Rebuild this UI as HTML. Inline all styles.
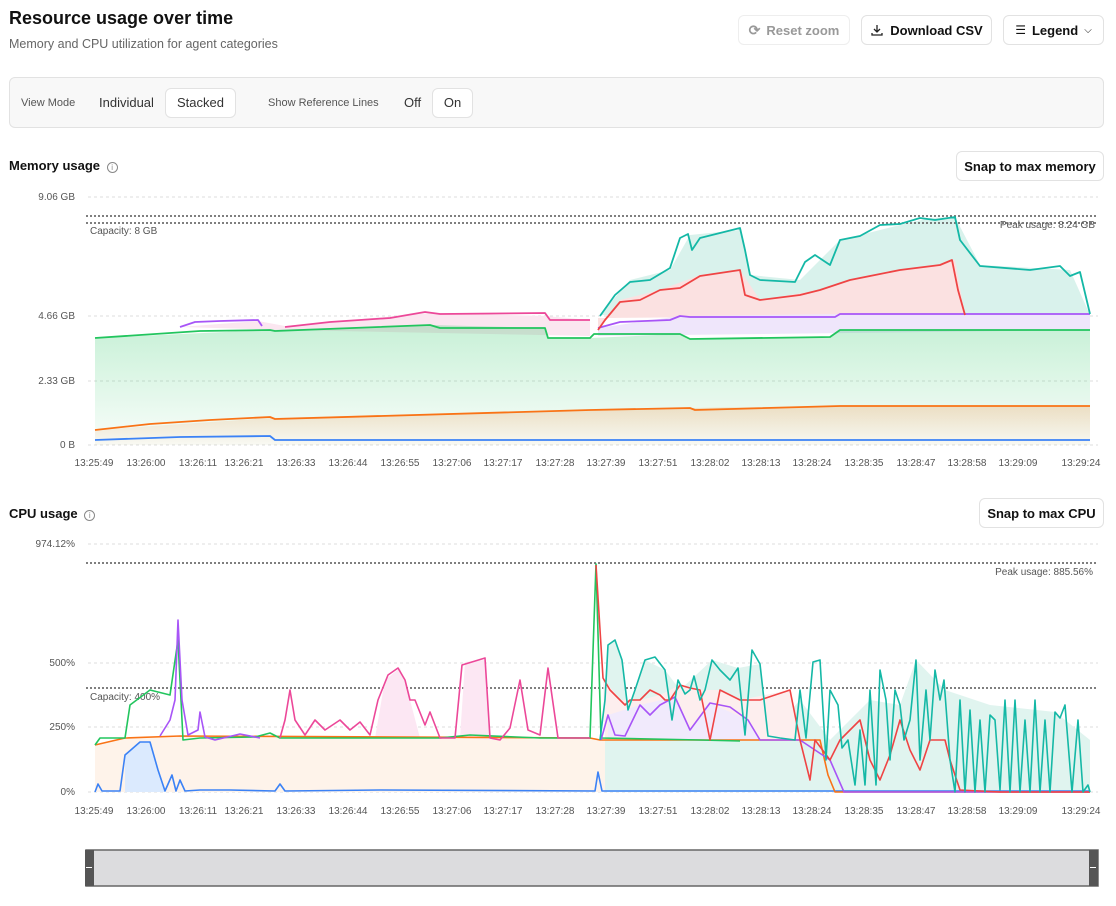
<!DOCTYPE html>
<html><head><meta charset="utf-8"><style>
*{box-sizing:border-box;margin:0;padding:0}
body{width:1116px;height:906px;background:#fff;font-family:"Liberation Sans",sans-serif;color:#111;position:relative;overflow:hidden}
.abs{position:absolute}
.btn{position:absolute;border:1px solid #e2e2e2;border-radius:6px;background:#fff;font-size:13px;font-weight:bold;display:flex;align-items:center;justify-content:center;gap:6px}
.ax{font-size:10px;fill:#555;font-family:"Liberation Sans",sans-serif}
</style></head><body>
<div class="abs" style="left:9px;top:8px;font-size:18px;font-weight:bold">Resource usage over time</div>
<div class="abs" style="left:9px;top:37px;font-size:12.5px;color:#666">Memory and CPU utilization for agent categories</div>
<div class="btn" style="left:738px;top:15px;width:112px;height:30px;color:#999;font-weight:bold;border-color:#eee"><span style="font-size:14px">⟳</span>Reset zoom</div>
<div class="btn" style="left:861px;top:15px;width:131px;height:30px"><svg width="14" height="14" viewBox="0 0 14 14" fill="none" stroke="#222" stroke-width="1.3"><path d="M7 2v7M4 6l3 3 3-3M2 10v2h10v-2"/></svg>Download CSV</div>
<div class="btn" style="left:1003px;top:15px;width:101px;height:30px"><span style="font-size:12px;font-weight:normal">☰</span>Legend<span style="font-weight:normal;font-size:10px">⌵</span></div>
<div class="abs" style="left:9px;top:77px;width:1095px;height:51px;background:#f8f8f8;border:1px solid #e2e2e2;border-radius:6px"></div>
<div class="abs" style="left:21px;top:97px;font-size:11px;color:#555">View Mode</div>
<div class="abs" style="left:99px;top:95px;font-size:13px;color:#333">Individual</div>
<div class="abs" style="left:165px;top:88px;width:71px;height:30px;background:#fff;border:1px solid #e2e2e2;border-radius:6px;font-size:13px;color:#333;text-align:center;line-height:28px">Stacked</div>
<div class="abs" style="left:268px;top:97px;font-size:11px;color:#555">Show Reference Lines</div>
<div class="abs" style="left:404px;top:95px;font-size:13px;color:#333">Off</div>
<div class="abs" style="left:432px;top:88px;width:41px;height:30px;background:#fff;border:1px solid #e2e2e2;border-radius:6px;font-size:13px;color:#333;text-align:center;line-height:28px">On</div>
<div class="abs" style="left:9px;top:158px;font-size:13px;font-weight:bold">Memory usage <span style="display:inline-block;width:11px;height:11px;border:1px solid #888;border-radius:50%;font-size:8px;text-align:center;line-height:9px;color:#888;font-weight:normal;margin-left:3px">i</span></div>
<div class="btn" style="left:956px;top:151px;width:148px;height:30px">Snap to max memory</div>
<div class="abs" style="left:9px;top:506px;font-size:13px;font-weight:bold">CPU usage <span style="display:inline-block;width:11px;height:11px;border:1px solid #888;border-radius:50%;font-size:8px;text-align:center;line-height:9px;color:#888;font-weight:normal;margin-left:3px">i</span></div>
<div class="btn" style="left:979px;top:498px;width:125px;height:30px">Snap to max CPU</div>

<svg class="abs" style="left:0;top:0" width="1116" height="906">
<defs>
<linearGradient id="g1" x1="0" y1="0" x2="0" y2="1"><stop offset="0" stop-color="#22c55e" stop-opacity=".25"/><stop offset="1" stop-color="#22c55e" stop-opacity=".03"/></linearGradient>
<linearGradient id="g2" x1="0" y1="0" x2="0" y2="1"><stop offset="0" stop-color="#f97316" stop-opacity=".2"/><stop offset="1" stop-color="#f97316" stop-opacity=".03"/></linearGradient>
</defs>
<g stroke="#ddd" stroke-dasharray="3,3">
<line x1="88" y1="197" x2="1098" y2="197"/><line x1="88" y1="316" x2="1098" y2="316"/><line x1="88" y1="381" x2="1098" y2="381"/><line x1="88" y1="445" x2="1098" y2="445"/>
<line x1="88" y1="544" x2="1098" y2="544"/><line x1="88" y1="663" x2="1098" y2="663"/><line x1="88" y1="727" x2="1098" y2="727"/><line x1="88" y1="792" x2="1098" y2="792"/>
</g>
<!-- memory fills -->
<polygon fill="#d9f2ec" points="600,315 630,280 670,270 690,235 740,230 750,275 800,280 840,240 900,225 930,218 955,217 980,265 1070,270 1090,315 600,315"/>
<polygon fill="#fbe1e1" points="598,330 620,300 660,290 700,275 740,270 760,300 820,290 870,275 940,265 955,260 965,315 598,318"/>
<polygon fill="#fbe6f0" points="180,327 258,321 285,326 430,313 545,316 590,320 590,336 285,330"/>
<polygon fill="#efe6fb" points="598,328 680,316 840,314 1090,314 1090,330 598,336"/>
<polygon fill="url(#g1)" points="95,338 270,330 430,325 545,328 548,338 590,338 680,334 690,339 830,337 840,330 1090,330 1090,445 95,445"/>
<polygon fill="url(#g2)" points="95,430 270,418 590,410 690,408 840,406 1090,406 1090,445 95,445"/>
<g stroke="#555" stroke-dasharray="2,2" stroke-width="1.5">
<line x1="86" y1="216" x2="1098" y2="216"/><line x1="86" y1="223" x2="1098" y2="223"/>
<line x1="86" y1="563" x2="1098" y2="563"/><line x1="86" y1="688" x2="1098" y2="688"/>
</g>
<g class="ax" text-anchor="end">
<text x="75" y="200">9.06 GB</text><text x="75" y="319">4.66 GB</text><text x="75" y="384">2.33 GB</text><text x="75" y="448">0 B</text>
<text x="75" y="547">974.12%</text><text x="75" y="666">500%</text><text x="75" y="730">250%</text><text x="75" y="795">0%</text>
</g>
<text class="ax" x="90" y="234">Capacity: 8 GB</text>
<text class="ax" x="1095" y="228" text-anchor="end">Peak usage: 8.24 GB</text>
<text class="ax" x="1093" y="575" text-anchor="end">Peak usage: 885.56%</text>
<text class="ax" x="90" y="700">Capacity: 400%</text>
<g class="ax" text-anchor="middle">
<text x="94" y="466">13:25:49</text><text x="146" y="466">13:26:00</text><text x="198" y="466">13:26:11</text><text x="244" y="466">13:26:21</text><text x="296" y="466">13:26:33</text><text x="348" y="466">13:26:44</text><text x="400" y="466">13:26:55</text><text x="452" y="466">13:27:06</text><text x="503" y="466">13:27:17</text><text x="555" y="466">13:27:28</text><text x="606" y="466">13:27:39</text><text x="658" y="466">13:27:51</text><text x="710" y="466">13:28:02</text><text x="761" y="466">13:28:13</text><text x="812" y="466">13:28:24</text><text x="864" y="466">13:28:35</text><text x="916" y="466">13:28:47</text><text x="967" y="466">13:28:58</text><text x="1018" y="466">13:29:09</text><text x="1081" y="466">13:29:24</text>
</g>
<g class="ax" text-anchor="middle" transform="translate(0,348)">
<text x="94" y="466">13:25:49</text><text x="146" y="466">13:26:00</text><text x="198" y="466">13:26:11</text><text x="244" y="466">13:26:21</text><text x="296" y="466">13:26:33</text><text x="348" y="466">13:26:44</text><text x="400" y="466">13:26:55</text><text x="452" y="466">13:27:06</text><text x="503" y="466">13:27:17</text><text x="555" y="466">13:27:28</text><text x="606" y="466">13:27:39</text><text x="658" y="466">13:27:51</text><text x="710" y="466">13:28:02</text><text x="761" y="466">13:28:13</text><text x="812" y="466">13:28:24</text><text x="864" y="466">13:28:35</text><text x="916" y="466">13:28:47</text><text x="967" y="466">13:28:58</text><text x="1018" y="466">13:29:09</text><text x="1081" y="466">13:29:24</text>
</g>
<g fill="none" stroke-width="1.8" stroke-linejoin="round">
<polyline stroke="#3b82f6" points="95,440 180,437 270,436 275,440 1090,440"/>
<polyline stroke="#f97316" points="95,430 150,424 210,420 270,417 275,419 590,410 690,408 695,410 840,406 1090,406"/>
<polyline stroke="#22c55e" points="95,338 200,331 270,330 275,331 430,325 440,328 545,328 548,338 590,338 594,334 680,334 690,339 830,337 840,330 1090,330"/>
<polyline stroke="#a855f7" points="180,327 195,322 220,321 258,320 262,326"/>
<polyline stroke="#a855f7" points="598,328 620,322 670,320 680,316 690,317 835,317 840,314 1090,314"/>
<polyline stroke="#ec4899" points="285,327 330,322 390,318 425,312 440,314 545,313 550,320 590,320"/>
<polyline stroke="#ef4444" points="598,330 605,320 620,302 640,300 660,290 680,288 700,276 740,270 745,295 760,300 800,295 820,290 850,280 870,276 900,270 940,265 952,260 958,290 965,315"/>
<polyline stroke="#14b8a6" points="600,316 615,295 630,282 650,280 670,268 680,238 688,234 692,250 700,238 740,228 745,250 750,275 760,280 795,282 805,262 815,255 830,265 840,240 860,236 880,225 900,224 920,218 935,220 955,217 960,240 980,266 1030,270 1060,266 1070,276 1080,272 1090,314"/>
</g>
<!-- cpu fills -->
<polygon fill="#fef3ea" points="95,745 120,738 180,736 595,738 600,740 840,740 840,792 95,792"/>
<polygon fill="#dbeafe" points="125,755 140,742 150,742 158,770 165,792 125,792"/>
<polygon fill="#fce7f3" points="375,738 385,680 400,668 410,700 420,738"/>
<polygon fill="#fce7f3" points="460,738 465,662 485,660 490,740"/>
<polygon fill="#e0f4ef" points="605,680 608,645 615,640 622,660 628,710 645,660 665,670 680,690 712,660 738,668 760,664 768,736 800,700 830,740 870,700 900,705 916,660 945,690 990,705 1055,712 1090,740 1090,792 605,792"/>
<polygon fill="#fdeeee" points="603,678 620,700 640,700 660,695 680,685 700,690 720,690 740,700 790,690 800,740 605,740"/>
<polygon fill="#f1eafc" points="608,715 640,705 675,697 690,730 710,703 748,720 760,740 608,740"/>
<g fill="none" stroke-width="1.6" stroke-linejoin="round">
<polyline stroke="#3b82f6" points="95,792 98,784 102,791 120,791 125,755 140,742 150,742 158,770 165,791 172,775 176,791 180,780 185,791 200,790 230,790 275,791 280,784 285,791 380,790 595,791 598,772 602,791 1090,791"/>
<polyline stroke="#f97316" points="95,745 125,738 180,736 590,738 600,740 820,740 828,775 835,792 1090,792"/>
<polyline stroke="#22c55e" points="95,745 100,738 125,738 130,705 150,690 170,695 178,640 183,740 200,738 255,737 270,733 280,738 440,738 470,735 540,738 590,738 596,564 601,738 700,740 740,741"/>
<polyline stroke="#a855f7" points="160,736 170,720 175,700 178,620 182,700 188,735 198,730 200,712 205,737 215,740 240,734 260,738"/>
<polyline stroke="#a855f7" points="601,740 608,715 615,735 625,736 640,705 650,715 660,705 675,697 690,730 710,703 730,707 748,720 760,740 800,740 830,760 844,792 960,792 1000,792 1090,792"/>
<polyline stroke="#ec4899" points="280,738 285,720 290,690 295,720 305,735 315,720 325,730 340,720 350,730 360,722 370,735 378,700 388,675 398,668 405,680 410,700 415,700 425,725 430,712 440,738 455,738 462,665 485,658 490,738 500,740 510,728 520,680 528,730 540,735 548,668 558,738 590,738"/>
<polyline stroke="#ef4444" points="596,565 603,678 610,690 620,700 625,705 630,700 640,700 650,690 660,695 665,700 670,700 680,685 690,688 700,690 710,740 720,690 730,695 740,700 760,700 790,690 800,740 810,780 815,740 830,760 840,740 860,720 870,760 880,780 890,755 900,720 910,750 920,770 930,740 945,740 950,760 960,790 1000,792 1090,792"/>
<polyline stroke="#14b8a6" points="600,740 605,700 608,645 615,640 622,660 628,710 635,690 645,660 655,657 665,670 672,720 678,680 685,694 690,690 694,676 700,700 705,690 712,660 720,670 730,680 738,668 745,735 752,650 760,664 768,736 780,738 795,740 800,690 806,738 813,662 820,660 826,760 830,690 838,705 842,748 848,740 855,785 860,730 865,785 870,690 876,785 880,670 886,700 890,760 895,690 900,705 904,740 910,720 916,660 920,760 926,690 930,740 935,670 940,700 944,680 950,760 955,792 960,700 965,792 970,710 975,792 980,720 985,792 990,715 995,720 1000,790 1005,700 1010,792 1015,700 1020,792 1025,720 1030,792 1035,700 1040,792 1045,720 1050,792 1055,712 1060,718 1065,705 1072,792 1078,720 1083,792 1088,785 1090,792"/>
</g>
<!-- scrollbar -->
<rect x="86" y="850" width="1012" height="36" fill="#dcdcde" stroke="#666" stroke-width="1.5"/>
<rect x="85" y="850" width="9" height="36" fill="#555"/><rect x="1089" y="850" width="9" height="36" fill="#555"/>
<rect x="86" y="867" width="6" height="1" fill="#fff"/><rect x="1090" y="867" width="6" height="1" fill="#fff"/>
</svg>
</body></html>
